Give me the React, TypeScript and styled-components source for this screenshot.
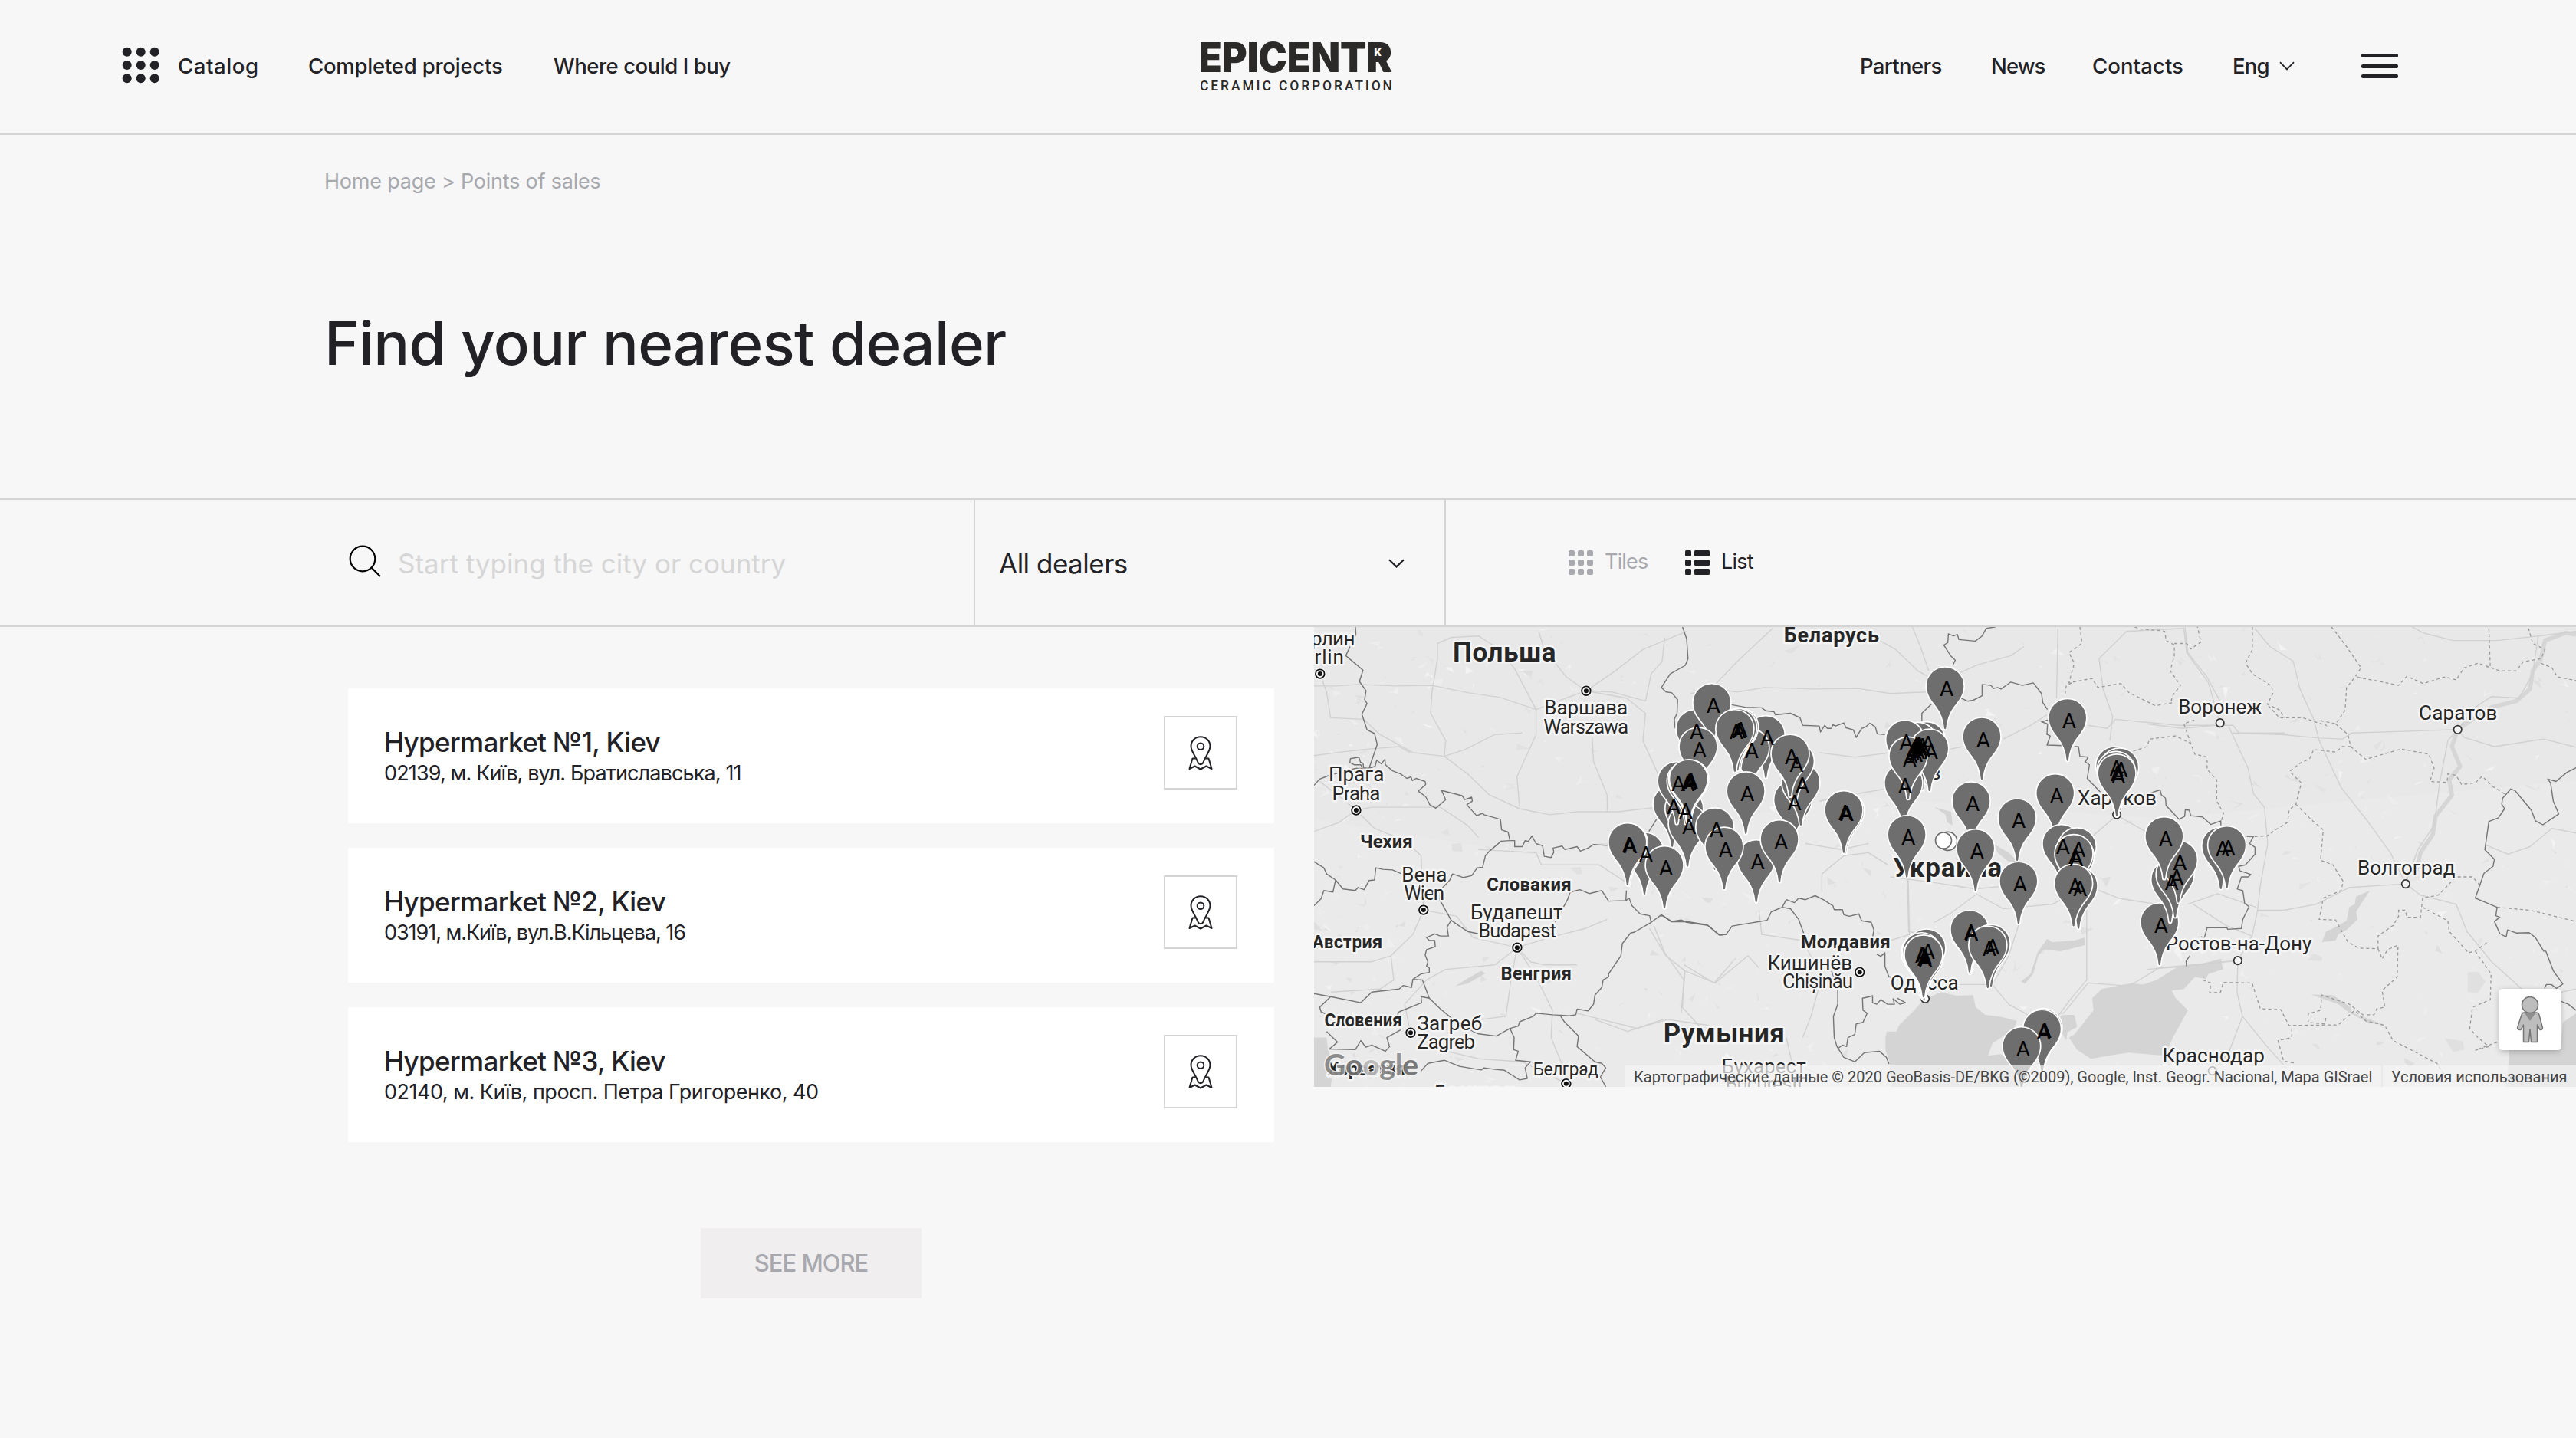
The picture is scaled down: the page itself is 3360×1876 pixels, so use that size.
import React from "react";
import styled, { createGlobalStyle } from "styled-components";

const ink = "#222126";
const muted = "#a8a9ae";
const line = "#d4d4d4";

const GlobalStyle = createGlobalStyle`
  * { box-sizing: border-box; }
  body {
    margin: 0;
    background: #f7f7f7;
    color: ${ink};
    font-family: Inter, "Liberation Sans", sans-serif;
  }
  button, input { font: inherit; color: inherit; }
`;

const Page = styled.div`
  width: 3360px;
  height: 1876px;
  overflow: hidden;
  background: #f7f7f7;
`;

const Header = styled.header`
  height: 176px;
  border-bottom: 2px solid ${line};
  display: grid;
  grid-template-columns: 1566px 250px 1fr;
  align-items: center;
`;

const Nav = styled.nav<{ $end?: boolean }>`
  display: flex;
  align-items: center;
  gap: 62px;
  justify-content: ${(p) => (p.$end ? "flex-end" : "flex-start")};
  padding: ${(p) => (p.$end ? "0 232px 2px 0" : "0 0 2px 159px")};
`;

const NavLink = styled.a<{ $w: number; $ls?: number }>`
  display: flex;
  align-items: center;
  width: ${(p) => p.$w}px;
  font-size: 27.5px;
  font-weight: 500;
  line-height: 40px;
  letter-spacing: ${(p) => p.$ls ?? -0.8}px;
  white-space: nowrap;
`;

const DotsIcon = styled.svg`
  width: 50px;
  height: 50px;
  margin-right: 23px;
  margin-bottom: 2px;
  flex: none;
`;

const Logo = styled.svg`
  width: 250px;
  height: 72px;
`;

const Burger = styled.div`
  width: 48px;
  margin-left: 24px;
  display: flex;
  flex-direction: column;
  gap: 8.5px;
`;

const BurgerBar = styled.span`
  height: 5px;
  border-radius: 2px;
  background: ${ink};
`;

const Breadcrumb = styled.div`
  margin: 41px 0 0 423px;
  font-size: 27px;
  line-height: 40px;
  letter-spacing: -0.22px;
  color: ${muted};
`;

const Title = styled.h1`
  margin: 141px 0 152px 423px;
  font-size: 78px;
  font-weight: 500;
  line-height: 100px;
  letter-spacing: -0.7px;
  white-space: nowrap;
`;

const Filters = styled.section`
  height: 168px;
  border-top: 2px solid ${line};
  border-bottom: 2px solid ${line};
  display: grid;
  grid-template-columns: 1272px 614px 1fr;
`;

const SearchCell = styled.label`
  display: flex;
  align-items: center;
  padding: 0 20px 0 455px;
  border-right: 2px solid ${line};
`;

const SearchIcon = styled.svg`
  width: 42px;
  height: 42px;
  margin-bottom: 4px;
`;

const SearchInput = styled.input`
  flex: 1;
  min-width: 0;
  height: 60px;
  margin: 2px 0 0 22px;
  padding: 0;
  border: 0;
  outline: 0;
  background: none;
  font-size: 35px;
  letter-spacing: 0;
  &::placeholder { color: #d6d6d6; opacity: 1; }
`;

const SelectCell = styled.div`
  display: flex;
  align-items: center;
  justify-content: space-between;
  padding: 2px 52px 0 31px;
  border-right: 2px solid ${line};
`;

const SelectText = styled.span`
  font-size: 35px;
  letter-spacing: -0.5px;
`;

const ViewCell = styled.div`
  display: flex;
  align-items: center;
  padding-left: 160px;
  gap: 48px;
`;

const ViewOption = styled.div<{ $active?: boolean; $w: number }>`
  display: flex;
  align-items: center;
  gap: 15px;
  width: ${(p) => p.$w}px;
  color: ${(p) => (p.$active ? ink : muted)};
  font-size: 27px;
  letter-spacing: -0.8px;
  line-height: 36px;
  span { padding-bottom: 2px; }
`;

const Content = styled.main`
  display: grid;
  grid-template-columns: 1208px 1646px;
  column-gap: 52px;
  padding-left: 454px;
  align-items: start;
`;

const DealerColumn = styled.section`
  display: flex;
  flex-direction: column;
  gap: 32px;
  padding-top: 80px;
`;

const Card = styled.article`
  height: 176px;
  background: #fff;
  display: flex;
  justify-content: space-between;
  padding: 0 48px 0 47px;
`;

const CardText = styled.div`
  padding-top: 50px;
`;

const DealerName = styled.h2`
  margin: 0;
  font-size: 35px;
  font-weight: 500;
  line-height: 40px;
  letter-spacing: -0.7px;
`;

const DealerAddress = styled.p<{ $ls: number }>`
  margin: 1px 0 0;
  font-size: 27px;
  line-height: 40px;
  letter-spacing: ${(p) => p.$ls}px;
`;

const PlaceButton = styled.button`
  width: 96px;
  height: 96px;
  margin-top: 36px;
  padding: 0;
  display: grid;
  place-items: center;
  border: 2px solid ${line};
  background: #fff;
`;

const PlaceIcon = styled.svg`
  width: 32px;
  height: 45px;
`;

const MoreButton = styled.button`
  align-self: center;
  width: 288px;
  height: 92px;
  margin-top: 80px;
  padding: 0 0 2px;
  border: 0;
  background: #f0eeee;
  color: ${muted};
  font-size: 31px;
  font-weight: 500;
  letter-spacing: -1px;
`;

const MapPanel = styled.section`
  display: grid;
  height: 600px;
  overflow: hidden;
  background: #e8e8e8;
  font-family: Roboto, "Liberation Sans", sans-serif;
`;

const MapDrawing = styled.svg`
  grid-area: 1 / 1;
  width: 1646px;
  height: 600px;
  font-family: Roboto, "Liberation Sans", sans-serif;
`;

const MapFooter = styled.div`
  grid-area: 1 / 1;
  align-self: end;
  justify-self: end;
  display: flex;
  gap: 2px;
  z-index: 1;
`;

const MapNote = styled.span<{ $w: number }>`
  width: ${(p) => p.$w}px;
  height: 28px;
  padding-left: 11px;
  background: rgba(245, 245, 245, 0.7);
  color: #444;
  font-size: 20px;
  line-height: 30px;
  white-space: nowrap;
`;

const PegButton = styled.div`
  grid-area: 1 / 1;
  align-self: end;
  justify-self: end;
  width: 80px;
  height: 80px;
  margin: 0 20px 48px 0;
  display: grid;
  place-items: center;
  background: #fff;
  border-radius: 4px;
  box-shadow: 0 2px 8px -1px rgba(0, 0, 0, 0.3);
  z-index: 1;
`;

/* ---------- map data: four sheets, west to east ---------- */

const SX = 2.8;
const SY = 2.529;
const sheetX = { W: -14, C: 366, U: 706, E: 1086 };
type Sheet = keyof typeof sheetX;
const mx = (s: Sheet, x: number) => sheetX[s] + x / SX;
const my = (y: number) => y / SY - 18;

const toPath = (s: Sheet, pts: string) =>
  "M" +
  pts
    .trim()
    .split(/\s+/)
    .map((p) => {
      const [x, y] = p.split(",").map(Number);
      return `${mx(s, x).toFixed(1)} ${my(y).toFixed(1)}`;
    })
    .join("L");

type Lines = [Sheet, string][];

const borders: Lines = [
  ["W", "190,45 192,70 155,140 218,188 205,225 229,256 224,285 233,298 214,333 233,385 260,397 270,433 240,512"],
  ["W", "39,568 60,547 95,535 150,522 190,512 216,512 210,500 186,500 170,493 172,480 203,475 209,492 218,495 220,510 240,512 262,505 268,485 285,497 298,482 300,500 326,520 355,530 378,545 393,540 398,552 412,545 445,555 447,565 420,587 447,605 462,632 484,643 520,615 505,585 580,602 590,615 615,607 617,620 597,632 633,668 655,660 660,665 720,680 724,715 748,722 755,750 772,750 772,770 800,770 810,750 822,753 835,735 850,760 874,767 880,802 905,806 915,788 912,775 945,768 955,780 1000,770 1012,785 1040,775 1060,763 1110,766"],
  ["W", "755,750 722,752 680,785 665,800 655,838 635,840 615,866 585,872 545,860 535,880 510,905 500,920 498,945 540,1013 525,1035 530,1065 500,1065 480,1058 450,1070 460,1080 480,1080 482,1100 450,1110 445,1128 455,1150 450,1165 460,1170 460,1185 430,1190 400,1208"],
  ["W", "39,820 75,840 85,860 118,880 108,920 75,915 65,942 39,965"],
  ["W", "118,880 145,910 190,915 200,905 222,912 240,882 260,880 265,840 290,845 325,847 360,860 400,870"],
  ["W", "540,1013 570,1032 600,1050 640,1058"],
  ["W", "920,1020 965,945 975,920 1010,912 1045,925 1090,915 1115,950 1178,948 1180,915"],
  ["W", "1178,948 1190,940 1200,965 1230,992 1265,998 1270,1020 1210,1052 1195,1055 1165,1090 1160,1130 1115,1190 1115,1200 1095,1210 1090,1235 1065,1260 1060,1290 1040,1312 1000,1306 995,1325 970,1328 910,1325 850,1320 840,1330 790,1348 785,1362 755,1370 705,1395 640,1388 620,1380 540,1335 500,1305 460,1270 435,1210 400,1208 395,1235 365,1228 350,1240 250,1250 210,1285 100,1265 39,1255"],
  ["W", "460,1270 430,1265 432,1285 350,1315 340,1330"],
  ["W", "100,1265 60,1300 65,1315 100,1330"],
  ["W", "85,1380 125,1415 95,1438 190,1440 210,1410 228,1432 250,1425 300,1445 315,1430 305,1400 355,1375"],
  ["W", "755,1370 770,1400 768,1440 785,1445 775,1475 830,1480 810,1500 818,1535 790,1540 755,1520 735,1508 700,1505 660,1500 650,1507 570,1495 515,1475 455,1485 430,1510"],
  ["W", "940,1330 955,1350 1005,1395 1000,1430 1065,1480 1090,1485 1105,1500 1085,1530 1105,1563"],
  ["W", "1270,1020 1308,995 1345,1017 1380,1012 1400,1020 1478,1030 1520,1062 1545,1060"],
  ["W", "1385,45 1400,85 1405,150 1395,172 1340,200 1308,245 1325,260 1345,262 1367,285 1365,330 1355,350 1358,380"],
  ["W", "1290,680 1262,720"],
  ["C", "500,302 550,310 610,312 625,322 655,325 660,335 715,330 750,345 760,370 820,372 825,392 840,370 850,380 865,380 870,368 880,372 910,362 918,378 945,385 955,410 975,380 990,375 1005,363 1025,375 1032,398 1060,400"],
  ["C", "1195,355 1195,330 1230,300"],
  ["C", "1465,45 1430,50 1415,75 1390,92 1330,87 1325,70 1310,75 1292,68 1290,97 1275,105 1300,140 1317,155 1308,172"],
  ["U", "380,278 410,290 430,287 463,272 463,235 495,238 505,248 520,245 532,250 568,227 610,238 650,230 680,265 685,295 702,318"],
  ["U", "705,352 680,358 702,365 700,400 712,405 700,435 760,437"],
  ["U", "800,440 815,440 820,472 850,475 840,490 855,500 847,545 895,590"],
  ["U", "1055,600 1113,583 1118,600 1133,610 1135,635 1183,680 1203,670 1205,648 1220,650 1225,668 1268,672 1298,697 1335,685 1335,700"],
  ["U", "1430,737 1455,735 1440,760 1460,772 1460,795 1425,830 1400,835 1405,850 1445,862 1435,870 1410,870 1395,910 1415,915 1422,958 1438,968 1415,1010 1410,1040 1360,1043 1357,1037 1285,1038 1275,1070 1262,1068"],
  ["U", "1222,1130 1208,1148 1210,1165"],
  ["C", "460,1062 480,1060 502,1032 630,1013 645,985 685,970 700,945 730,955 745,940 770,945 805,932 835,945 870,965 875,978 905,978 910,995 930,1000 965,992 975,1015 1010,1020 1020,1045 1015,1070"],
  ["C", "240,1000 248,998 280,1018 340,1018 410,1028 455,1062 480,1060"],
  ["C", "1030,1125 1045,1132 1060,1120 1060,1165 1075,1200 1090,1200"],
  ["C", "1105,1270 1135,1285 1115,1290 1090,1272 1095,1290 1070,1290 1045,1275 1030,1290 1015,1285 1015,1262 1005,1265 978,1270 980,1310 995,1320 980,1350 955,1355 950,1390 925,1400 920,1430 905,1425 890,1435"],
  ["C", "685,970 715,975 745,1010 765,1060"],
  ["C", "865,1180 888,1235 888,1290 872,1330 875,1400 885,1430 910,1465 950,1480 985,1450 1040,1445 1065,1465 1075,1487"],
  ["E", "1568,510 1535,525 1495,555 1465,547 1475,560 1485,620 1505,662 1447,698 1420,685 1405,650 1345,585 1330,580 1300,610 1297,630 1307,645 1285,675 1250,687 1235,780 1270,812 1265,835 1232,858 1200,940 1280,970 1275,998 1290,1003 1270,1017 1290,1057 1313,1068 1318,1045 1350,1055 1397,1054 1420,1070 1450,1115 1458,1115 1485,1180 1520,1223 1497,1238 1478,1225 1460,1225 1453,1238"],
  ["E", "1512,1280 1540,1290 1568,1310"],
];

const regions: Lines = [
  ["U", "1020,45 1040,52 1120,58 1130,60 1135,90 1165,105 1165,140 1150,190 1188,238 1160,270 1150,300"],
  ["U", "1165,100 1210,100 1225,118 1262,95 1250,45"],
  ["U", "1450,45 1450,120 1425,165 1450,200 1520,240 1525,265 1505,300 1550,320 1568,345"],
  ["U", "820,45 828,98 805,115 780,130 800,165 780,230 865,215 885,245 970,232 1000,262 1095,305 1160,295"],
  ["U", "790,230 770,240 765,275"],
  ["U", "1015,455 1065,440 1075,415 1170,405 1225,430 1240,465 1285,475 1285,515 1320,550 1320,620 1345,660 1335,690"],
  ["U", "1225,430 1200,365 1245,350"],
  ["E", "445,305 485,345 570,345 655,370 640,355 690,365 725,320 730,245 762,210"],
  ["E", "675,45 730,110 783,180 762,210 850,225 920,238 950,208 1010,232 1090,210 1130,220 1160,180 1210,165 1290,190 1350,190 1375,160 1440,150 1455,120 1410,100 1395,50"],
  ["E", "1250,50 1255,180 1240,180"],
  ["E", "1440,165 1480,180 1500,210 1568,222"],
  ["E", "690,365 735,400 745,440 715,440 690,458 610,450 595,480 560,495 522,522 565,560 545,630 520,650 515,690 470,715 440,735 360,738"],
  ["E", "745,440 800,482 930,448 1030,465 1050,510 1035,555 1097,558 1100,530 1130,535 1150,565 1200,560 1225,538 1265,572 1310,598"],
  ["E", "545,630 600,680 645,715 635,815 680,830 718,885 710,915 645,940 630,1010 690,1012 735,1085 775,1105 845,1107 845,1065 900,1030 920,1000 920,980 945,980 950,1003 1000,1003 1008,940 1065,930 1130,870 1190,870 1215,895"],
  ["E", "845,1107 860,1140 880,1110 918,1095 915,1200 860,1245 870,1300 840,1305 830,1325 790,1325 740,1290 640,1260 635,1310 590,1322 590,1350 650,1355 655,1335"],
  ["E", "1008,970 1100,1015 1105,1050 1175,1120 1200,1115 1245,1085"],
  ["E", "1200,1115 1258,1190 1255,1275 1190,1300 1180,1370 1210,1400 1250,1430 1200,1442 1290,1412"],
  ["E", "1280,970 1400,980 1568,1017"],
  ["E", "205,1210 235,1220 230,1252 270,1250 280,1218 385,1220 415,1305 490,1308 520,1360 700,1358 760,1310 800,1345 870,1360 900,1410 1060,1485 1085,1520"],
  ["E", "530,1370 530,1400 480,1410 500,1478 545,1485"],
];

const roads: Lines = [
  ["W", "39,240 120,240 200,235 340,240 470,238 600,262 720,278 850,318 960,280 1033,256 1130,260 1250,290"],
  ["W", "61,200 85,260 100,345 220,350 280,400 400,460 515,472 590,450 700,400 800,395"],
  ["W", "515,472 520,420 465,330 470,260 490,150 490,100 540,80 640,75 700,110 770,180 850,318 850,400 780,540 790,640"],
  ["W", "515,472 600,530 680,600 790,645 900,665 1000,655 1150,655 1290,640"],
  ["W", "193,650 250,640 380,640 500,640 600,700 640,740"],
  ["W", "193,650 140,610 60,555"],
  ["W", "193,650 130,690 39,720"],
  ["W", "193,650 260,710 370,750 430,800 435,900 439,979"],
  ["W", "439,979 560,1000 620,1070 781,1103 830,1150 880,1160 1000,1160"],
  ["W", "781,1103 700,1160 520,1175 450,1210 370,1290 392,1384"],
  ["W", "781,1103 850,1200 910,1310 905,1400 950,1500"],
  ["W", "781,1103 900,1070 1030,1040 1110,1010"],
  ["W", "781,1103 760,1200 740,1330 610,1345"],
  ["W", "439,979 400,1060 320,1130 250,1150 39,1150"],
  ["W", "320,1130 330,1210 280,1240 100,1250"],
  ["W", "392,1384 500,1440 640,1470 800,1480 960,1552"],
  ["W", "640,780 850,790 870,830 1080,830 1200,900"],
  ["W", "1033,256 960,210 880,120 860,60"],
  ["W", "1033,256 1140,190 1240,120 1400,60"],
  ["W", "1055,410 1060,490 1110,600 1110,655"],
  ["W", "1033,256 1180,280 1250,330 1240,420 1310,560"],
  ["W", "1250,290 1270,200 1310,160 1320,80"],
  ["W", "1000,1320 1220,1370 1330,1340 1480,1360"],
  ["W", "1280,1030 1320,1120 1390,1210 1380,1320"],
  ["W", "1390,1160 1500,1220 1568,1150"],
  ["W", "39,470 120,460 240,448 350,440 390,460"],
  ["C", "350,265 440,250 520,260 620,245 800,250 960,248 1080,265 1210,260"],
  ["C", "440,235 520,160 650,50"],
  ["C", "980,60 1100,120 1180,190 1280,240"],
  ["C", "1160,45 1190,110 1220,190"],
  ["C", "1300,210 1400,170 1520,140 1568,110"],
  ["C", "830,920 830,860 910,800 1000,790 1070,830"],
  ["C", "770,760 900,780 1000,760"],
  ["C", "820,460 950,475 1080,460"],
  ["C", "820,620 930,600 1060,580"],
  ["C", "1145,870 1150,1060 1080,1080"],
  ["C", "1080,870 1250,890 1390,910 1500,900"],
  ["C", "1390,930 1300,990 1240,1020"],
  ["C", "600,980 610,1060 760,1080 830,1200 790,1330 760,1400"],
  ["C", "200,1040 260,1130 330,1180 320,1300 400,1380"],
  ["C", "330,1180 440,1220 560,1130 600,1170"],
  ["C", "0,1340 120,1380 250,1340"],
  ["C", "700,1400 720,1480 860,1540"],
  ["U", "540,415 640,370 700,335"],
  ["U", "850,370 920,380 950,350 1180,370 1380,370 1400,395 1568,395"],
  ["U", "890,150 905,250 940,340 930,420"],
  ["U", "890,150 990,60 1200,50 1210,130 1290,230 1332,362"],
  ["U", "740,50 735,280"],
  ["U", "955,667 1060,720 1120,830"],
  ["U", "955,667 860,740 830,830 845,980 845,1210"],
  ["U", "440,925 540,975 720,960 850,900 960,940 1100,960"],
  ["U", "600,1020 560,1130 500,1225 380,1225"],
  ["U", "500,1225 560,1290 640,1330 760,1320 850,1220 1000,1230 1110,1170 1397,1146"],
  ["U", "845,1210 780,1280 740,1330"],
  ["U", "340,450 390,440"],
  ["U", "190,870 195,1050 250,1060"],
  ["E", "395,50 450,110 535,158 560,250 610,350 630,420 710,575 810,690 890,790 946,893"],
  ["E", "312,395 490,400 630,412 715,415 750,395 1000,388 1136,384"],
  ["E", "300,375 370,510 390,595 430,640 442,760 415,900 405,980 385,1065 333,1146"],
  ["E", "405,980 500,980 620,960 740,905 946,893"],
  ["E", "333,1146 330,1250 350,1330 300,1450 240,1510"],
  ["E", "350,1330 440,1430 520,1510"],
  ["E", "1136,384 1100,420 1070,560 1050,700 990,780 946,893"],
  ["E", "1136,384 1160,410 1270,440 1450,415 1568,442"],
  ["E", "1136,384 1200,310 1260,275 1360,280 1410,200 1430,75"],
  ["E", "970,45 1010,65 1120,90 1280,90 1430,75 1568,60"],
  ["E", "946,893 1000,930 1130,960 1170,1050 1260,1150 1370,1240"],
  ["E", "0,365 130,380 250,370"],
  ["E", "150,960 260,925 400,970"],
  ["E", "140,45 150,130 220,210 268,290"],
  ["E", "1240,765 1320,795 1400,770 1480,710 1568,725"],
  ["E", "1370,1240 1460,1260 1568,1240"],
  ["E", "0,1175 140,1165 333,1146"],
  ["E", "170,960 290,1030 385,1065"],
];

const waters: Lines = [
  ["U", "130,1563 125,1480 110,1440 110,1400 115,1380 150,1380 160,1360 215,1310 245,1280 310,1250 370,1262 430,1260 440,1300 475,1325 525,1330 590,1345 580,1370 500,1420 485,1460 530,1455 570,1470 600,1500 620,1563"],
  ["U", "780,1400 800,1390 870,1310 865,1270 900,1240 1010,1220 1050,1225 1100,1210 1180,1165 1250,1160 1335,1140 1343,1175 1290,1190 1280,1207 1240,1200 1200,1240 1155,1245 1170,1270 1215,1310 1190,1350 1160,1400 1130,1460 1000,1450 960,1455 860,1470 810,1440"],
  ["U", "735,1330 765,1325 800,1325 810,1365 775,1382 770,1410 745,1370"],
  ["U", "605,1215 640,1190 665,1120 700,1075 720,1085 800,1080 838,1070 840,1095 750,1115 690,1110 668,1130 650,1190 620,1222"],
  ["U", "500,758 560,790 600,825 560,820 520,790"],
  ["U", "290,640 350,655 355,700 335,690 330,665"],
  ["E", "1320,1500 1325,1440 1510,1440 1520,1350 1568,1320 1568,1563 1310,1563"],
  ["E", "640,1085 655,1050 680,1040 730,1015 740,970 760,960 765,935 815,915 790,950 765,985 770,1010 730,1045 700,1060 690,1080"],
  ["E", "600,1258 680,1260 745,1300 750,1318 870,1358 810,1352 740,1318 700,1290"],
  ["W", "39,1400 85,1400 90,1440 110,1500 100,1563 39,1563"],
  ["W", "555,1230 600,1205 650,1180 665,1188 600,1222"],
];

const steppes: Lines = [
  ["E", "1173,1185 1210,1183 1238,1215 1210,1252 1173,1250"],
  ["E", "1088,1402 1155,1412 1160,1440 1120,1448"],
];

const volga: Lines = [
  ["E", "1568,70 1530,65 1455,90 1440,150 1410,190 1400,250 1350,290 1260,310 1190,350 1136,384 1115,440 1145,505 1105,550 1115,600 1055,670 1045,730 1000,790 985,850"],
];

type Label = [Sheet, string, number, number, number, number, boolean?];
const labels: Label[] = [
  ["W", "Берлин", -50, 186, 106, 26],
  ["W", "Berlin", -45, 145, 167, 26],
  ["W", "Польша", 549, 920, 160, 35, true],
  ["W", "Варшава", 883, 1182, 333, 26],
  ["W", "Warszawa", 880, 1185, 396, 26],
  ["W", "Прага", 95, 292, 555, 26],
  ["W", "Praha", 108, 278, 618, 26],
  ["W", "Чехия", 210, 397, 774, 24, true],
  ["W", "Вена", 362, 522, 885, 26],
  ["W", "Wien", 370, 513, 946, 26],
  ["W", "Словакия", 673, 976, 916, 24, true],
  ["W", "Будапешт", 613, 945, 1008, 26],
  ["W", "Budapest", 642, 921, 1070, 26],
  ["W", "Австрия", 34, 286, 1105, 24, true],
  ["W", "Венгрия", 724, 977, 1208, 24, true],
  ["W", "Словения", 80, 359, 1362, 23, true],
  ["W", "Загреб", 418, 650, 1375, 26],
  ["W", "Zagreb", 418, 625, 1437, 26],
  ["W", "Хорватия", 92, 370, 1525, 23, true],
  ["W", "Босния и", 484, 770, 1599, 23, true],
  ["W", "Белград", 842, 1075, 1524, 23],
  ["C", "Беларусь", 694, 1036, 95, 27, true],
  ["C", "Украина", 1093, 1485, 870, 35, true],
  ["C", "Киев", 1120, 1262, 548, 26],
  ["C", "Молдавия", 755, 1077, 1106, 24, true],
  ["C", "Кишинёв", 634, 938, 1175, 26],
  ["C", "Chișinău", 689, 941, 1237, 26],
  ["C", "Одесса", 1083, 1326, 1242, 26],
  ["C", "Румыния", 254, 691, 1416, 35, true],
  ["C", "Бухарест", 466, 769, 1518, 26],
  ["C", "București", 480, 755, 1575, 26],
  ["E", "Воронеж", 118, 418, 331, 26],
  ["U", "Харьков", 815, 1097, 633, 26],
  ["E", "Ростов-на-Дону", 72, 600, 1114, 26],
  ["E", "Краснодар", 60, 428, 1482, 26],
  ["E", "Волгоград", 773, 1124, 862, 26],
  ["E", "Саратов", 997, 1278, 352, 26],
];

const capitals: [Sheet, number, number][] = [
  ["W", 61, 200], ["W", 1033, 256], ["W", 193, 650], ["W", 439, 979],
  ["W", 781, 1103], ["W", 392, 1384], ["W", 960, 1552], ["C", 968, 1184],
];

const towns: [Sheet, number, number][] = [
  ["E", 268, 362], ["E", 1136, 384], ["E", 946, 893], ["E", 333, 1146],
  ["E", 240, 1510], ["U", 955, 664], ["C", 1207, 1272],
];

/* pin head centre x, head top y, and a stacking level where it differs from y */
type Pin = [Sheet, number, number, number?];
const pins: Pin[] = [
  ["C", 428, 232], ["C", 367, 318, 230], ["C", 378, 377], ["C", 300, 490, 480], ["C", 334, 490, 481],
  ["C", 340, 485, 482], ["C", 347, 483, 482], ["C", 343, 483, 484], ["C", 283, 566, 470], ["C", 327, 581, 471],
  ["C", 339, 631, 472], ["C", 120, 692, 692], ["C", 124, 694, 691], ["C", 182, 723, 690], ["C", 255, 768],
  ["C", 439, 642], ["C", 473, 706], ["C", 590, 748, 600], ["C", 675, 682], ["C", 552, 523],
  ["C", 512, 318], ["C", 522, 314], ["C", 528, 312], ["C", 568, 381, 310], ["C", 625, 338, 300],
  ["C", 714, 400], ["C", 732, 425, 398], ["C", 753, 495, 395], ["C", 724, 552, 390], ["C", 910, 586],
  ["C", 915, 588, 585], ["C", 1280, 177], ["C", 1414, 344],
  ["C", 1150, 398, 300], ["C", 1156, 388, 300], ["C", 1160, 378, 301], ["C", 1165, 372, 302],
  ["C", 1176, 366, 302], ["C", 1180, 370, 302], ["C", 1185, 376, 302], ["C", 1175, 384, 302],
  ["C", 1168, 392, 302], ["C", 1192, 366, 303], ["C", 1196, 378, 303], ["C", 1212, 358, 304],
  ["C", 1170, 364, 305], ["C", 1180, 360, 306], ["C", 1128, 497, 340], ["C", 1133, 353], ["C", 1223, 382],
  ["C", 1145, 408],
  ["C", 1140, 667], ["C", 1375, 556], ["C", 1391, 712], ["C", 1543, 612],
  ["C", 1548, 820], ["C", 1371, 985, 979], ["C", 1369, 980], ["C", 1448, 1027], ["C", 1436, 1032],
  ["C", 1212, 1042, 1050], ["C", 1190, 1056, 1051], ["C", 1194, 1054, 1052], ["C", 1198, 1066, 1053],
  ["C", 1203, 1070, 1053], ["C", 1201, 1062],
  ["U", 775, 282], ["U", 730, 530], ["U", 955, 465], ["U", 965, 445], ["U", 948, 440], ["U", 952, 456],
  ["U", 753, 697], ["U", 810, 708], ["U", 802, 738, 729], ["U", 798, 730], ["U", 815, 836, 820], ["U", 797, 828],
  ["U", 1111, 956, 600], ["U", 1150, 815, 610], ["U", 1168, 798, 620], ["U", 1180, 750, 630], ["U", 1128, 672],
  ["U", 1335, 705, 700], ["U", 1357, 702], ["U", 686, 1304], ["U", 682, 1308], ["U", 607, 1365],
];

const pinShape =
  "M0 0C14 0 25 11 25 25C25 36 19 44 12.500 52C6 60.500 3 68 2 80A2 2 0 0 1-2 80C-3 68-6 60.500-12.500 52C-19 44-25 36-25 25C-25 11-14 0 0 0Z";

/* small relief facets scattered over the land */
const facets = (() => {
  let seed = 17;
  const rnd = () => ((seed = (seed * 16807) % 2147483647) / 2147483647);
  const tones = ["#f3f3f3", "#efefef", "#e1e1e1", "#e3e3e3", "#ededed", "#dfdfdf"];
  return Array.from({ length: 620 }, () => {
    const x = Math.pow(rnd(), 1.35) * 1646;
    const y = rnd() * 600;
    const r = 3 + rnd() * 9;
    const pts = Array.from({ length: 4 }, () => `${(x + (rnd() - 0.5) * r * 2).toFixed(1)},${(y + (rnd() - 0.5) * r * 1.6).toFixed(1)}`);
    return { d: pts.join(" "), tone: tones[Math.floor(rnd() * tones.length)] };
  });
})();

const DealerMap = () => {
  const sorted = [...pins].sort((a, b) => (a[3] ?? a[2]) - (b[3] ?? b[2]));
  return (
    <MapDrawing viewBox="0 0 1646 600">
      <rect width="1646" height="600" fill="#e8e8e8" />
      <path d="M0 600V250L300 300L700 220L1100 250L1646 200V600Z" fill="#eaeaea" />
      {facets.map((f, i) => (
        <polygon key={i} points={f.d} fill={f.tone} />
      ))}
      <g fill="#d4d4d4">
        {waters.map(([s, p], i) => (
          <path key={i} d={toPath(s, p) + "Z"} />
        ))}
      </g>
      <g fill="#e0e0e0">
        {steppes.map(([s, p], i) => (
          <path key={i} d={toPath(s, p) + "Z"} />
        ))}
      </g>
      <path d={toPath(...volga[0])} fill="none" stroke="#d6d6d6" strokeWidth="5.500" strokeLinejoin="round" />
      <g fill="none" stroke="#d1d1d1" strokeWidth="1.400" strokeLinejoin="round">
        {roads.map(([s, p], i) => (
          <path key={i} d={toPath(s, p)} />
        ))}
      </g>
      <g fill="none" stroke="#9a9a9a" strokeWidth="1.300" strokeDasharray="4 3.500">
        {regions.map(([s, p], i) => (
          <path key={i} d={toPath(s, p)} />
        ))}
      </g>
      <g fill="none" stroke="#757575" strokeWidth="1.400" strokeLinejoin="round">
        {borders.map(([s, p], i) => (
          <path key={i} d={toPath(s, p)} />
        ))}
      </g>
      {capitals.map(([s, x, y], i) => (
        <g key={i} transform={`translate(${mx(s, x)} ${my(y)})`}>
          <circle r="8" fill="#f5f5f5" />
          <circle r="5.800" fill="#f5f5f5" stroke="#111" strokeWidth="1.800" />
          <circle r="3" fill="#111" />
        </g>
      ))}
      {towns.map(([s, x, y], i) => (
        <circle key={i} cx={mx(s, x)} cy={my(y)} r="5.200" fill="#f3f3f3" stroke="#333" strokeWidth="1.700" />
      ))}
      <g fill="#262626" stroke="#f5f5f5" strokeWidth="5" strokeLinejoin="round" paintOrder="stroke">
        {labels.map(([s, t, x1, x2, y, size, bold]) => (
          <text
            key={t}
            x={mx(s, x1) - 1}
            y={my(y)}
            fontSize={size}
            fontWeight={bold ? 700 : 400}
            textLength={(x2 - x1) / SX + 2}
          >
            {t}
          </text>
        ))}
      </g>
      <g fill="#fff" stroke="#6e6e6e" strokeWidth="1.600">
        <circle cx={mx("C", 1290)} cy={my(752)} r="12" />
        <circle cx={mx("C", 1274)} cy={my(750)} r="10.500" />
      </g>
      <g fill="#6e6e6e" stroke="#fff" strokeWidth="1.700">
        {sorted.map(([s, x, y], i) => (
          <path key={i} d={pinShape} transform={`translate(${mx(s, x)} ${my(y)})`} />
        ))}
      </g>
      <g fill="#000" fontSize="28" textAnchor="middle">
        {sorted.map(([s, x, y], i) => (
          <text key={i} x={mx(s, x) + 2} y={my(y) + 38.5}>
            A
          </text>
        ))}
      </g>
      <text
        x="13"
        y="585"
        fontFamily="Lato, sans-serif"
        fontWeight="700"
        fontSize="39"
        textLength="123"
        stroke="#f2f2f2"
        strokeWidth="3"
        paintOrder="stroke"
        opacity="0.92"
      >
        <tspan fill="#858585">G</tspan>
        <tspan fill="#6f6f6f">o</tspan>
        <tspan fill="#b9b9b9">o</tspan>
        <tspan fill="#858585">g</tspan>
        <tspan fill="#8f8f8f">l</tspan>
        <tspan fill="#6f6f6f">e</tspan>
      </text>
    </MapDrawing>
  );
};

const Pegman = () => (
  <svg width="36" height="62" viewBox="0 0 36 62" fill="#bdbdbd" stroke="#757575" strokeWidth="1.500" strokeLinejoin="round">
    <path d="M10 22L26 22Q29 22 30 25L34.500 42Q34 45 31 44.500L27.500 38V60.500H19.500L18 44L16.500 60.500H9.500V38L6 44.500Q2 45 1.500 42L7 25Q8 22 10 22Z" />
    <path d="M10.500 22H25.500L18 33Z" fill="#8f8f8f" stroke="none" />
    <circle cx="18" cy="12" r="10.500" />
  </svg>
);

const Chevron = ({ w = 20, thick = 2, ml = 0 }: { w?: number; thick?: number; ml?: number }) => (
  <svg width={w + ml} height="12" viewBox={`${-ml} 0 ${w + ml} 12`} fill="none" stroke={ink} strokeWidth={thick}>
    <path d={`M1 1.200L${w / 2} 10.400L${w - 1} 1.200`} />
  </svg>
);

const triple = [0, 1, 2];

const TilesIcon = () => (
  <svg width="32" height="32" viewBox="0 0 32 32" fill={muted}>
    {triple.map((r) => triple.map((c) => <rect key={`${r}${c}`} x={c * 12} y={r * 12} width="8" height="8" rx="2" />))}
  </svg>
);

const ListIcon = () => (
  <svg width="32" height="32" viewBox="0 0 32 32" fill={ink}>
    {triple.map((r) => (
      <g key={r}>
        <rect x="0" y={r * 12} width="8" height="8" rx="1.500" />
        <rect x="12" y={r * 12} width="20" height="8" rx="1.500" />
      </g>
    ))}
  </svg>
);

const dealers = [
  { name: "Hypermarket №1, Kiev", address: "02139, м. Київ, вул. Братиславська, 11", tracking: -0.86 },
  { name: "Hypermarket №2, Kiev", address: "03191, м.Київ, вул.В.Кільцева, 16", tracking: -1.05 },
  { name: "Hypermarket №3, Kiev", address: "02140, м. Київ, просп. Петра Григоренко, 40", tracking: -0.5 },
];

export default function App() {
  return (
    <Page>
      <GlobalStyle />
      <Header>
        <Nav>
          <NavLink $w={181} $ls={0.6}>
            <DotsIcon viewBox="0 0 50 50" fill={ink}>
              {triple.map((r) => triple.map((c) => <circle key={`${r}${c}`} cx={6.7 + c * 18} cy={7.7 + r * 17.3} r="6" />))}
            </DotsIcon>
            Catalog
          </NavLink>
          <NavLink $w={258} $ls={-0.22}>Completed projects</NavLink>
          <NavLink $w={240} $ls={-0.45}>Where could I buy</NavLink>
        </Nav>
        <Logo viewBox="0 0 250 72" fill="#2b2a29">
          <text x="-3" y="42.500" fontSize="53" fontWeight="900" textLength="253" lengthAdjust="spacingAndGlyphs">
            EPICENTR
          </text>
          <rect x="224" y="11" width="15" height="13" />
          <text x="226.500" y="21.500" fontSize="12.500" fontWeight="900" fill="#fff">
            K
          </text>
          <text x="-1" y="67" fontSize="17.500" fontWeight="500" fontFamily="Roboto, sans-serif" textLength="251">
            CERAMIC CORPORATION
          </text>
        </Logo>
        <Nav $end>
          <NavLink $w={109} $ls={-0.65}>Partners</NavLink>
          <NavLink $w={70} $ls={-0.9}>News</NavLink>
          <NavLink $w={121} $ls={0.1}>Contacts</NavLink>
          <NavLink $w={82}>
            Eng
            <Chevron w={20} thick={1.8} ml={13} />
          </NavLink>
          <Burger>
            <BurgerBar />
            <BurgerBar />
            <BurgerBar />
          </Burger>
        </Nav>
      </Header>

      <Breadcrumb>Home page &gt; Points of sales</Breadcrumb>
      <Title>Find your nearest dealer</Title>

      <Filters>
        <SearchCell>
          <SearchIcon viewBox="0 0 42 42" fill="none" stroke="#000" strokeWidth="2.200">
            <circle cx="18" cy="18" r="16.300" />
            <path d="M29.500 29.500L41 41" />
          </SearchIcon>
          <SearchInput placeholder="Start typing the city or country" />
        </SearchCell>
        <SelectCell>
          <SelectText>All dealers</SelectText>
          <Chevron w={21} thick={2.2} />
        </SelectCell>
        <ViewCell>
          <ViewOption $w={104}>
            <TilesIcon />
            <span>Tiles</span>
          </ViewOption>
          <ViewOption $w={100} $active>
            <ListIcon />
            <span>List</span>
          </ViewOption>
        </ViewCell>
      </Filters>

      <Content>
        <DealerColumn>
          {dealers.map((d) => (
            <Card key={d.name}>
              <CardText>
                <DealerName>{d.name}</DealerName>
                <DealerAddress $ls={d.tracking}>{d.address}</DealerAddress>
              </CardText>
              <PlaceButton>
                <PlaceIcon viewBox="0 0 32 45" fill="none" stroke={ink} strokeWidth="2" strokeLinejoin="round">
                  <path d="M16 1.200C23 1.200 28.500 6.500 28.500 13.500C28.500 20 22.500 26.500 19.500 34.500C18.200 38 13.800 38 12.500 34.500C9.500 26.500 3.500 20 3.500 13.500C3.500 6.500 9 1.200 16 1.200Z" />
                  <circle cx="16" cy="13.700" r="4.300" />
                  <path d="M9.500 29.500H5.500L1.500 43L8.500 39.500L16 43.500L23.500 39.500L30.500 43L26.500 29.500H22.500" />
                </PlaceIcon>
              </PlaceButton>
            </Card>
          ))}
          <MoreButton>SEE MORE</MoreButton>
        </DealerColumn>

        <MapPanel>
          <DealerMap />
          <PegButton>
            <Pegman />
          </PegButton>
          <MapFooter>
            <MapNote $w={986}>
              Картографические данные © 2020 GeoBasis-DE/BKG (©2009), Google, Inst. Geogr. Nacional, Mapa GISrael
            </MapNote>
            <MapNote $w={252}>Условия использования</MapNote>
          </MapFooter>
        </MapPanel>
      </Content>
    </Page>
  );
}
